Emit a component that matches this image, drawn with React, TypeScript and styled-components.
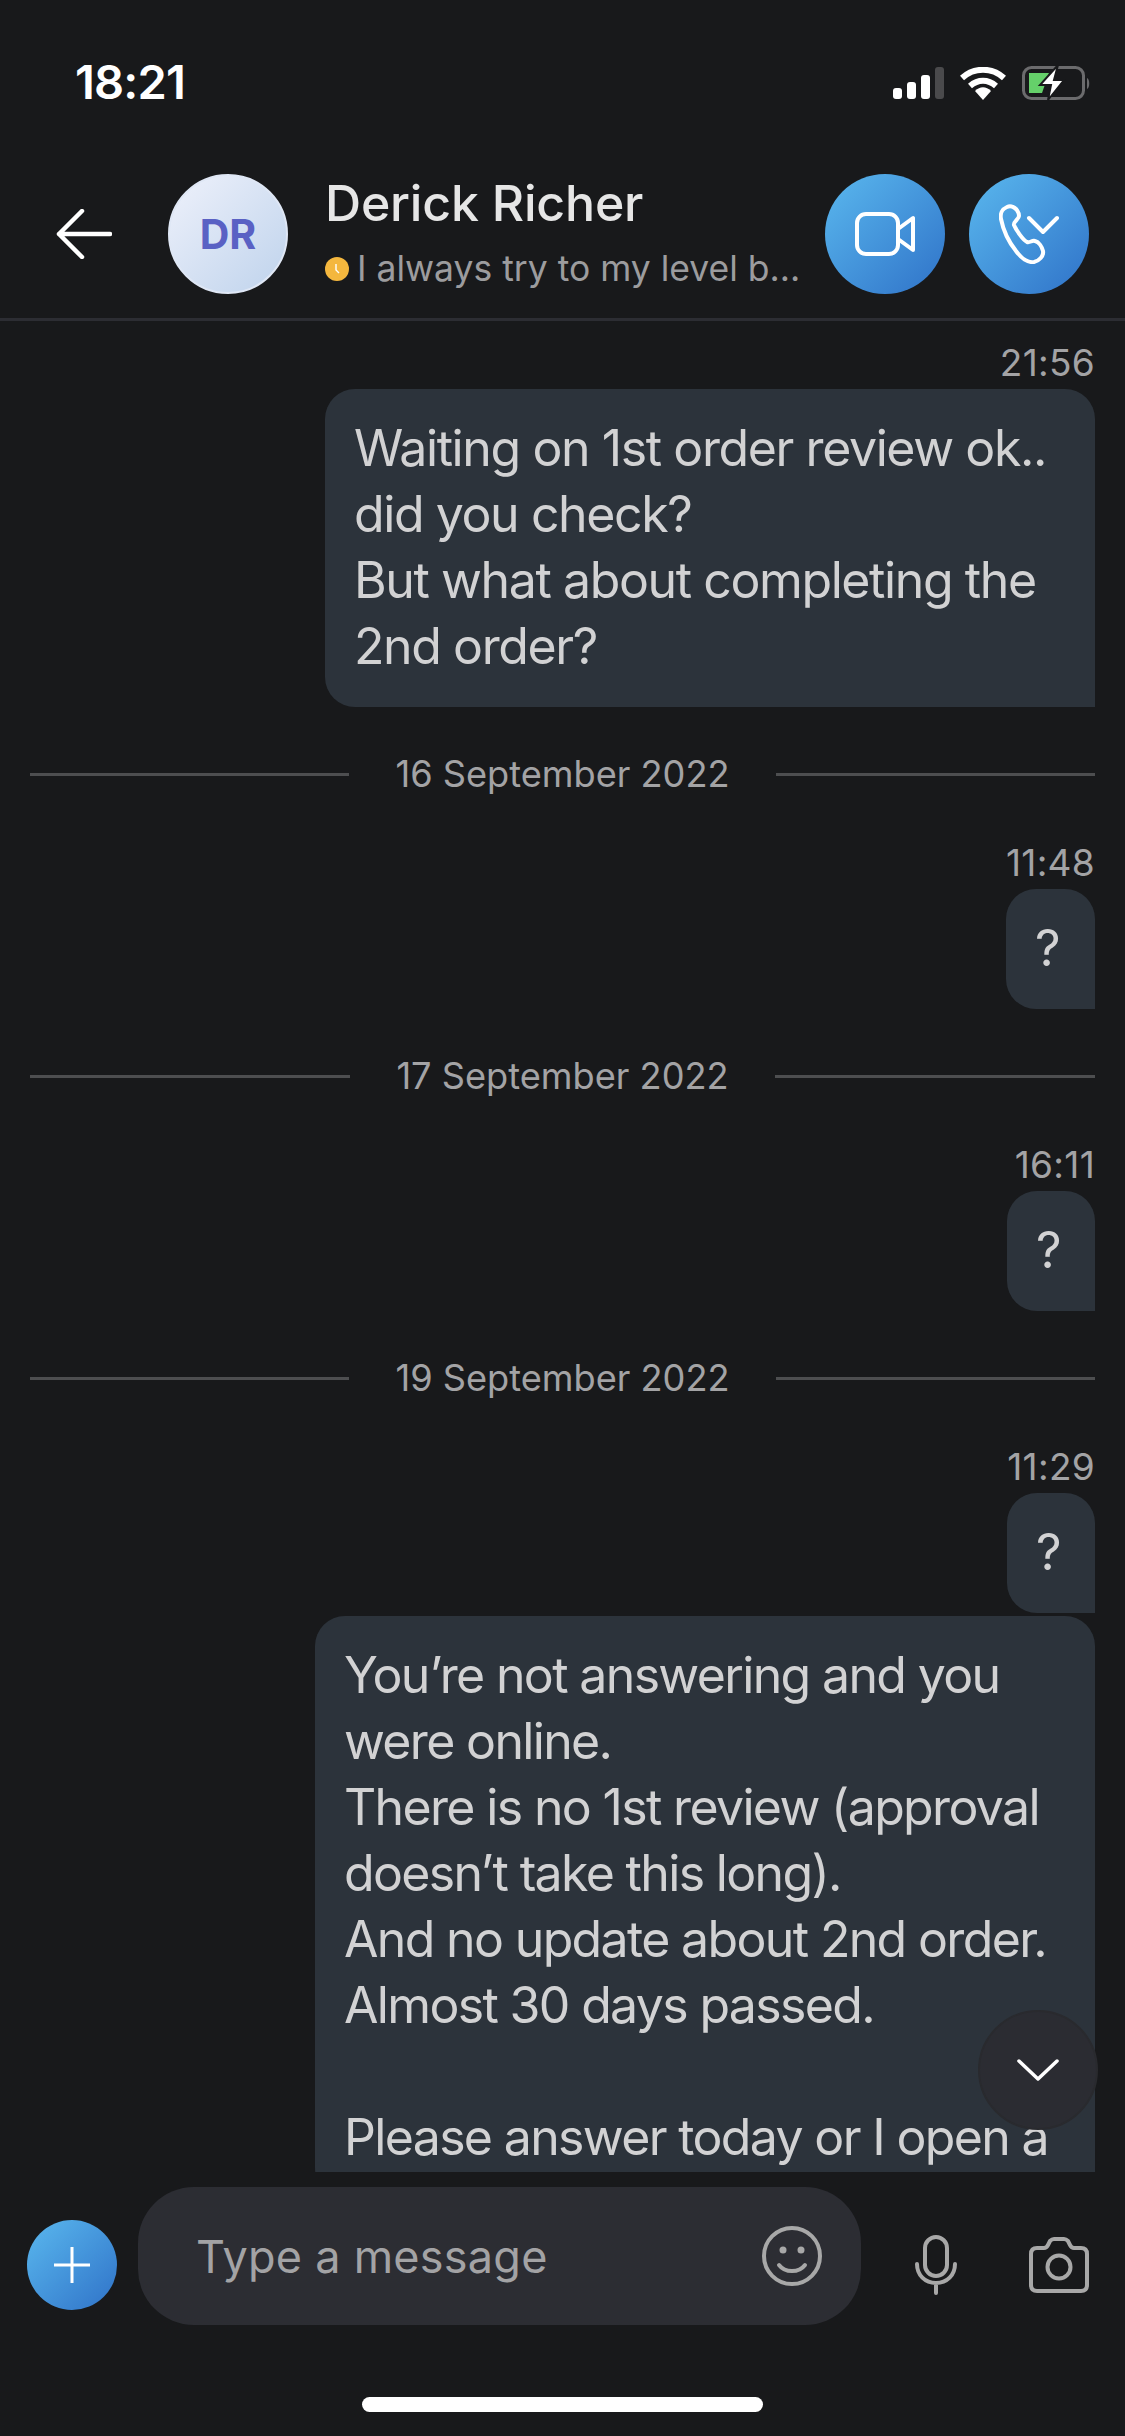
import React from 'react'
import styled, { createGlobalStyle } from 'styled-components'

const GlobalStyle = createGlobalStyle`
  html, body {
    margin: 0;
    padding: 0;
    background: #18191b;
  }
  * {
    box-sizing: border-box;
  }
`

const Screen = styled.div`
  position: relative;
  width: 1125px;
  height: 2436px;
  overflow: hidden;
  display: flex;
  flex-direction: column;
  background: #18191b;
  font-family: Inter, "Liberation Sans", sans-serif;
`

const StatusBar = styled.div`
  height: 174px;
  flex: none;
  display: flex;
  align-items: flex-start;
  justify-content: space-between;
  padding: 58px 34px 0 75px;
`

const Clock = styled.span`
  color: #fff;
  font-size: 47px;
  line-height: 48px;
  font-weight: 600;
  letter-spacing: -0.8px;
`

const StatusIcons = styled.div`
  display: flex;
  align-items: center;
  gap: 16px;
  padding-top: 7px;
`

const Header = styled.header`
  flex: none;
  height: 147px;
  display: flex;
  align-items: flex-start;
  padding: 0 36px 0 56px;
  border-bottom: 3px solid #2c2d33;
`

const BackButton = styled.div`
  width: 112px;
  height: 120px;
  flex: none;
  display: flex;
  align-items: center;
`

const Avatar = styled.div`
  width: 120px;
  height: 120px;
  flex: none;
  border-radius: 50%;
  display: flex;
  align-items: center;
  justify-content: center;
  color: #5a61c4;
  font-size: 41px;
  font-weight: 700;
  background: linear-gradient(135deg, #eef1fb 0%, #bfd3ec 100%);
  border: 2px solid #dfe7f5;
`

const Contact = styled.div`
  flex: 1;
  min-width: 0;
  padding: 1px 0 0 37px;
`

const Name = styled.div`
  color: #e6e6e6;
  font-size: 50px;
  line-height: 56px;
  font-weight: 500;
  letter-spacing: -0.2px;
`

const Mood = styled.div`
  display: flex;
  align-items: center;
  gap: 8px;
  margin-top: 16px;
  color: #9c9c9e;
  font-size: 35.5px;
  line-height: 44px;
  white-space: nowrap;
`

const MoodDot = styled.svg`
  flex: none;
`

const CallButtons = styled.div`
  display: flex;
  gap: 24px;
  flex: none;
`

const RoundButton = styled.div<{ $size: number }>`
  width: ${({ $size }) => $size}px;
  height: ${({ $size }) => $size}px;
  flex: none;
  border-radius: 50%;
  display: flex;
  align-items: center;
  justify-content: center;
  background: linear-gradient(135deg, #5ab8ee 0%, #2f72c8 100%);
`

const Chat = styled.main`
  flex: 1;
  min-height: 0;
  overflow: hidden;
  padding: 0 30px;
  display: flex;
  flex-direction: column;
`

const Message = styled.div`
  align-self: flex-end;
  flex: none;
  display: flex;
  flex-direction: column;
  margin-top: 22px;
`

const Time = styled.div`
  align-self: flex-end;
  color: #a3a3a5;
  font-size: 37px;
  line-height: 40px;
  margin-bottom: 6px;
  letter-spacing: 0.3px;
`

const Bubble = styled.div`
  background: #2c333b;
  color: #d2d2d3;
  border-radius: 30px 30px 0 30px;
  font-size: 50px;
  line-height: 66px;
  padding: 26px 49px 28px 29px;
  white-space: pre-wrap;
  letter-spacing: -1.4px;
`

const QuestionBubble = styled(Bubble)`
  min-width: 88px;
  padding-right: 0;
`

const NextBubble = styled(Bubble)`
  align-self: flex-end;
  flex: none;
  margin-top: 3px;
  padding-right: 47px;
  letter-spacing: -1.65px;
`

const DateRow = styled.div`
  flex: none;
  height: 46px;
  margin-top: 44px;
  display: flex;
  align-items: center;
  justify-content: center;
  gap: 46px;
  color: #a3a3a5;
  font-size: 36.2px;
  & + ${Message} {
    margin-top: 46px;
  }
  &::before, &::after {
    content: '';
    flex: 1;
    height: 3px;
    background: #4d4e50;
  }
`

const ScrollDown = styled.div`
  position: absolute;
  left: 978px;
  top: 2010px;
  width: 120px;
  height: 120px;
  border-radius: 50%;
  background: #2b2c32;
  border: 2px solid #292a2e;
  display: flex;
  align-items: center;
  justify-content: center;
`

const Composer = styled.footer`
  flex: none;
  height: 153px;
  padding: 15px 36px 0 27px;
  display: flex;
  align-items: flex-start;
`

const PlusSlot = styled.div`
  height: 138px;
  display: flex;
  align-items: center;
  margin-top: 9px;
`

const InputBox = styled.div`
  width: 723px;
  height: 138px;
  margin-left: 21px;
  flex: none;
  border-radius: 56px;
  background: #2c2d33;
  display: flex;
  align-items: center;
  justify-content: space-between;
  padding: 0 39px 0 58px;
  color: #a3a3a5;
  font-size: 45px;
  letter-spacing: 0.25px;
`

const ToolIcons = styled.div`
  flex: 1;
  height: 138px;
  display: flex;
  align-items: center;
  justify-content: space-between;
  padding: 18px 0 0 54px;
`

const HomeBar = styled.div`
  flex: none;
  height: 111px;
  display: flex;
  justify-content: center;
  padding-top: 72px;
  &::after {
    content: '';
    width: 401px;
    height: 15px;
    border-radius: 8px;
    background: #fff;
  }
`

const days = [
  { date: '16 September 2022', time: '11:48' },
  { date: '17 September 2022', time: '16:11' },
  { date: '19 September 2022', time: '11:29' },
]

export default function App() {
  return (
    <Screen>
      <GlobalStyle />
      <StatusBar>
        <Clock>18:21</Clock>
        <StatusIcons>
          <svg width="51" height="32" viewBox="0 0 51 32">
            <rect x="0" y="21" width="9" height="11" rx="3" fill="#fff" />
            <rect x="14" y="15" width="9" height="17" rx="3" fill="#fff" />
            <rect x="28" y="8" width="9" height="24" rx="3" fill="#fff" />
            <rect x="42" y="0" width="9" height="32" rx="3" fill="#4a4a4c" />
          </svg>
          <svg width="46" height="33" viewBox="0 0 46 33">
            <path d="M2 11C14 0 32 0 44 11" stroke="#fff" strokeWidth="6" fill="none" />
            <path d="M10 19C18 12 28 12 36 19" stroke="#fff" strokeWidth="6" fill="none" />
            <path d="M15 24C20 19 26 19 31 24L23 33Z" fill="#fff" />
          </svg>
          <svg width="69" height="36" viewBox="0 0 69 36">
            <rect x="1.5" y="2.5" width="60" height="31" rx="8" fill="none" stroke="#6b6b6d" strokeWidth="3" />
            <path d="M65 13C68 14 68 23 65 24Z" fill="#6b6b6d" />
            <path d="M7 8H27L20 28H7Z" fill="#65d06a" />
            <path d="M36 0L18 20H29L26 35L42 15H32Z" fill="#fff" stroke="#18191b" strokeWidth="2" />
          </svg>
        </StatusIcons>
      </StatusBar>
      <Header>
        <BackButton>
          <svg width="56" height="50" viewBox="0 0 56 50">
            <path d="M54 25H3M26 2L3 25L26 48" stroke="#fff" strokeWidth="4.5" fill="none" strokeLinecap="round" strokeLinejoin="round" />
          </svg>
        </BackButton>
        <Avatar>DR</Avatar>
        <Contact>
          <Name>Derick Richer</Name>
          <Mood>
            <MoodDot width="24" height="24" viewBox="0 0 24 24">
              <circle cx="12" cy="12" r="12" fill="#f4b73e" />
              <path d="M11 7V13L14 16" stroke="#fff" strokeWidth="1.4" fill="none" />
            </MoodDot>
            I always try to my level b...
          </Mood>
        </Contact>
        <CallButtons>
          <RoundButton $size={120}>
            <svg width="60" height="44" viewBox="0 0 60 44" fill="none" stroke="#fff" strokeWidth="4" strokeLinejoin="round">
              <rect x="2" y="2" width="41" height="40" rx="9" />
              <path d="M43 17L58 6V38L43 27" />
            </svg>
          </RoundButton>
          <RoundButton $size={120}>
            <svg width="60" height="60" viewBox="0 0 60 60" fill="none" stroke="#fff" strokeWidth="4" strokeLinecap="round" strokeLinejoin="round">
              <path d="M8 3C3 5 1 10 2 15C4 25 9 37 17 47C22 54 29 59 35 58C40 57 45 52 44 47C43 43 40 38 36 37C33 36 31 39 28 38C24 36 17 26 15 21C14 18 20 15 20 12C20 8 17 4 14 3C12 2 10 2 8 3Z" />
              <path d="M30 14L44 28L58 14" />
            </svg>
          </RoundButton>
        </CallButtons>
      </Header>
      <Chat>
        <Message>
          <Time>21:56</Time>
          <Bubble>{'Waiting on 1st order review ok..\ndid you check?\nBut what about completing the\n2nd order?'}</Bubble>
        </Message>
        {days.map((day) => (
          <React.Fragment key={day.date}>
            <DateRow>{day.date}</DateRow>
            <Message>
              <Time>{day.time}</Time>
              <QuestionBubble>?</QuestionBubble>
            </Message>
          </React.Fragment>
        ))}
        <NextBubble>{'You’re not answering and you\nwere online.\nThere is no 1st review (approval\ndoesn’t take this long).\nAnd no update about 2nd order.\nAlmost 30 days passed.\n\nPlease answer today or I open a'}</NextBubble>
      </Chat>
      <ScrollDown>
        <svg width="42" height="24" viewBox="0 0 42 24">
          <path d="M2 3L21 21L40 3" stroke="#fff" strokeWidth="3.5" fill="none" strokeLinecap="round" strokeLinejoin="round" />
        </svg>
      </ScrollDown>
      <Composer>
        <PlusSlot>
          <RoundButton $size={90}>
            <svg width="36" height="36" viewBox="0 0 36 36">
              <path d="M18 0V36M0 18H36" stroke="#fff" strokeWidth="3" />
            </svg>
          </RoundButton>
        </PlusSlot>
        <InputBox>
          Type a message
          <svg width="60" height="60" viewBox="0 0 60 60" fill="none" stroke="#a8a8a8" strokeWidth="4" strokeLinecap="round">
            <circle cx="30" cy="30" r="28" />
            <circle cx="21" cy="24" r="3.5" fill="#a8a8a8" stroke="none" />
            <circle cx="39" cy="24" r="3.5" fill="#a8a8a8" stroke="none" />
            <path d="M17 39C23 47 37 47 43 39" />
          </svg>
        </InputBox>
        <ToolIcons>
          <svg width="42" height="60" viewBox="0 0 42 60" fill="none" stroke="#a8a8a8" strokeWidth="4" strokeLinecap="round">
            <rect x="10" y="2" width="22" height="39" rx="11" />
            <path d="M2 29C2 40 10 48 21 48C32 48 40 40 40 29M21 48V58" />
          </svg>
          <svg width="60" height="56" viewBox="0 0 60 56" fill="none" stroke="#a8a8a8" strokeWidth="4" strokeLinejoin="round">
            <path d="M8 11H15C17 11 18 10 19 8L21 4C22 3 23 2 25 2H35C37 2 38 3 39 4L41 8C42 10 43 11 45 11H52C56 11 58 13 58 17V48C58 52 56 54 52 54H8C4 54 2 52 2 48V17C2 13 4 11 8 11Z" />
            <circle cx="30" cy="30" r="11.5" />
          </svg>
        </ToolIcons>
      </Composer>
      <HomeBar />
    </Screen>
  )
}
